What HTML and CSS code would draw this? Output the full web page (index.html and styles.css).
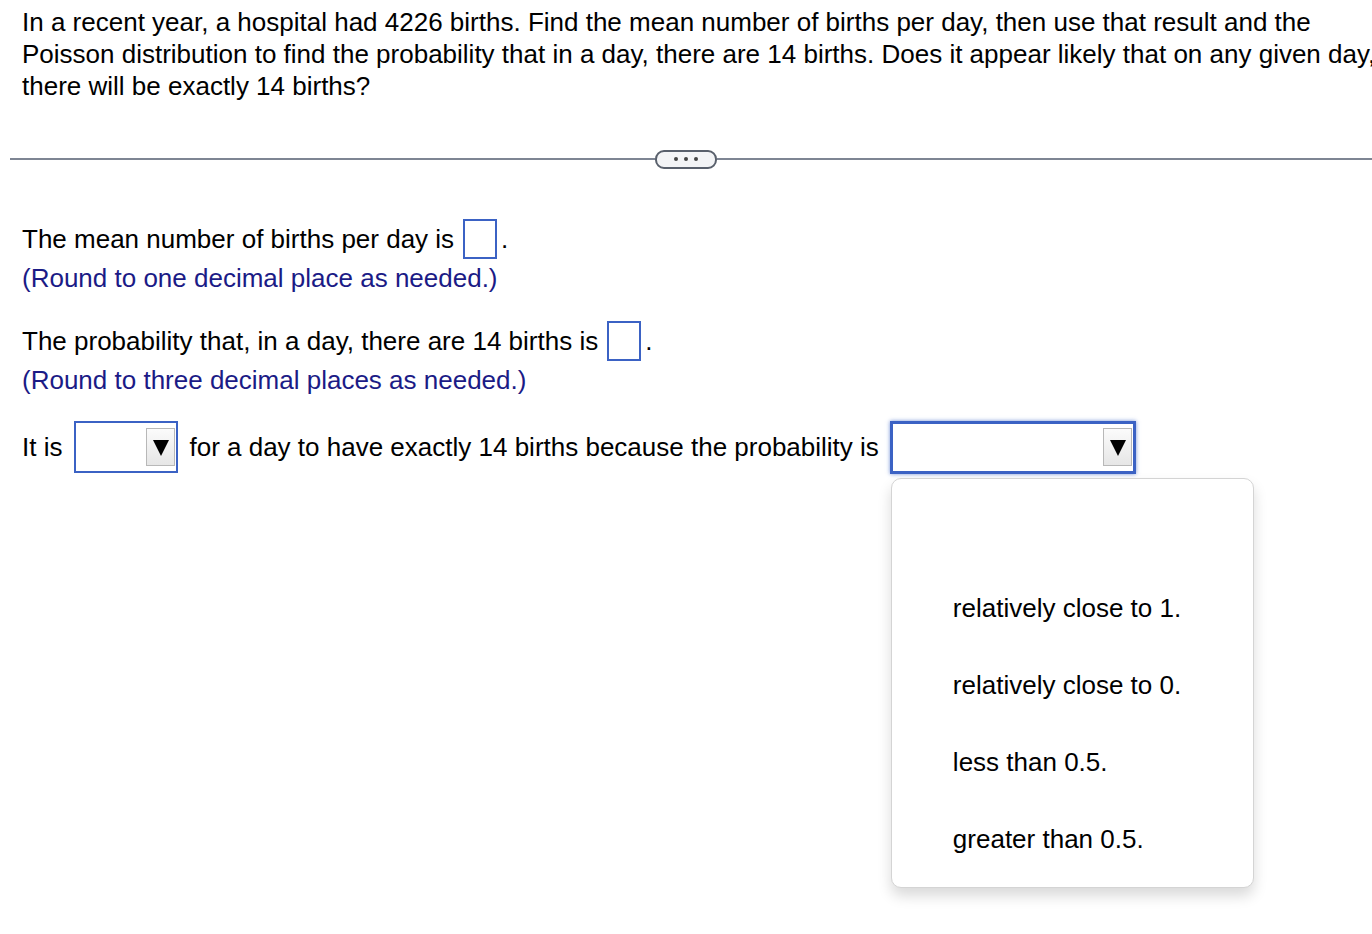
FILE: index.html
```html
<!DOCTYPE html>
<html>
<head>
<meta charset="utf-8">
<link rel="stylesheet" href="styles.css">
</head>
<body>
<div class="page">
  <div class="question">In a recent year, a hospital had 4226 births. Find the mean number of births per day, then use that result and the Poisson distribution to find the probability that in a day, there are 14 births. Does it appear likely that on any given day, there will be exactly 14 births?</div>
  <div class="divider">
    <div class="rule"></div>
    <div class="pill"><span></span><span></span><span></span></div>
    <div class="rule"></div>
  </div>
  <div class="answers">
    <div class="block">
      <div class="line">The mean number of births per day is <span class="box"></span>.</div>
      <div class="note">(Round to one decimal place as needed.)</div>
    </div>
    <div class="block last">
      <div class="line">The probability that, in a day, there are 14 births is <span class="box"></span>.</div>
      <div class="note">(Round to three decimal places as needed.)</div>
    </div>
    <div class="line select-line">
      <span>It is</span>
      <span class="select small"><span class="arrow"></span></span>
      <span>for a day to have exactly 14 births because the probability is</span>
      <div class="select-wrap">
        <span class="select large focused"><span class="arrow"></span></span>
        <div class="menu">
          <div class="option">relatively close to 1.</div>
          <div class="option">relatively close to 0.</div>
          <div class="option">less than 0.5.</div>
          <div class="option">greater than 0.5.</div>
        </div>
      </div>
    </div>
  </div>
</div>
</body>
</html>
```
FILE: styles.css
```css
html {
  overflow: hidden;
}
html, body {
  margin: 0;
  padding: 0;
  background: #fff;
  min-height: 100vh;
}
body {
  font-family: "Liberation Sans", Arial, sans-serif;
  font-size: 26px;
  color: #000;
}
.page {
  width: 1372px;
  min-height: 934px;
  overflow-x: clip;
}
.question {
  width: 1370px;
  padding: 6px 0 0 22px;
  line-height: 32px;
}
.divider {
  display: flex;
  align-items: center;
  margin: 48px 0 0 10px;
  height: 18px;
}
.rule {
  flex: 1;
  height: 2px;
  background: #7e8593;
}
.rule:first-child {
  flex: none;
  width: 645px;
}
.pill {
  width: 58px;
  height: 15px;
  border: 2px solid #59606c;
  border-radius: 9px;
  background: #f3f4f6;
  display: flex;
  align-items: center;
  justify-content: center;
  gap: 6px;
}
.pill span {
  width: 4px;
  height: 4px;
  border-radius: 50%;
  background: #444;
}
.answers {
  padding: 50px 0 0 22px;
}
.block {
  margin-bottom: 24px;
}
.block.last {
  margin-bottom: 22px;
}
.line {
  display: flex;
  align-items: center;
  height: 42px;
  white-space: nowrap;
}
.box {
  display: inline-block;
  width: 30px;
  height: 36px;
  border: 2px solid #3b62c4;
  margin: 0 4px 0 9px;
}
.note {
  color: #1b1b86;
  line-height: 36px;
}
.select-line {
  height: 54px;
}
.select {
  display: inline-flex;
  align-items: center;
  justify-content: flex-end;
  box-sizing: border-box;
  height: 52px;
  border: 2px solid #3b62c4;
  padding-right: 1px;
  background: #fff;
}
.select.small {
  width: 104px;
  margin: 0 11px 0 12px;
}
.select-wrap {
  position: relative;
  display: flex;
  margin-left: 11px;
}
.select.large {
  width: 246px;
  height: 53px;
  border-width: 3px;
  box-shadow: 0 0 4px rgba(59, 98, 196, 0.7);
}
.arrow {
  width: 29px;
  height: 38px;
  box-sizing: border-box;
  border: 1px solid #b8b8b8;
  background: linear-gradient(#fbfbfb, #e6e6e6);
  position: relative;
}
.arrow::after {
  content: "";
  position: absolute;
  left: 6px;
  top: 11px;
  border-left: 8px solid transparent;
  border-right: 8px solid transparent;
  border-top: 16px solid #000;
}
.menu {
  position: absolute;
  z-index: 10;
  left: 1px;
  top: 57px;
  width: 363px;
  height: 410px;
  box-sizing: border-box;
  border: 1px solid #d4d4d4;
  border-radius: 10px;
  background: #fff;
  box-shadow: 0 8px 14px rgba(0, 0, 0, 0.15);
  padding: 110px 0 0 61px;
}
.option {
  height: 77px;
  line-height: 38px;
}
```
